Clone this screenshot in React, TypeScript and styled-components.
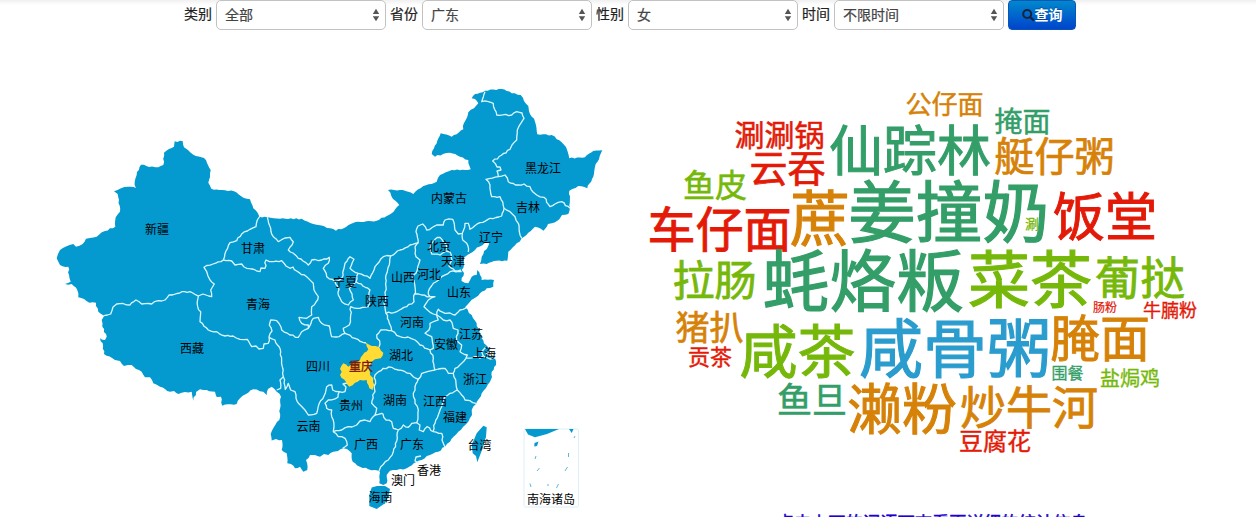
import React from 'react';
import styled, { createGlobalStyle } from 'styled-components';

const GlobalStyle = createGlobalStyle`
  * { box-sizing: border-box; }
  body {
    margin: 0;
    background: #fff;
    font-family: "Liberation Sans", "Noto Sans CJK SC", sans-serif;
    font-size: 14px;
    line-height: 20px;
    color: #222;
  }
`;

const Page = styled.div`
  width: 1256px;
  height: 517px;
  overflow: hidden;
  display: flex;
  flex-direction: column;
  background: linear-gradient(#f0f0f0, #fff 5px);
`;

const FilterBar = styled.form`
  display: flex;
  align-items: center;
  gap: 4px;
  height: 30px;
  flex: none;
  padding-left: 184px;
`;

const FilterLabel = styled.label`
  width: 28px;
  white-space: nowrap;
  height: 22px;
  -webkit-text-stroke: 0.2px currentColor;
`;

const SelectBox = styled.div`
  display: flex;
  align-items: center;
  justify-content: space-between;
  width: 170px;
  height: 30px;
  padding: 0 5px 0 8px;
  border: 1px solid #c2c2c2;
  border-radius: 5px;
  background: #fff;
  color: #444;
  -webkit-text-stroke: 0.2px currentColor;
`;

const SearchButton = styled.button`
  display: flex;
  align-items: center;
  justify-content: center;
  width: 68px;
  height: 30px;
  padding: 0;
  border: 1px solid #0a55b8;
  border-radius: 4px;
  background: linear-gradient(#0088cc, #0044cc);
  color: #fff;
  font: bold 14px/20px "Liberation Sans", "Noto Sans CJK SC", sans-serif;
  text-shadow: 0 -1px 0 rgba(0, 0, 0, 0.25);
`;

const Content = styled.main`
  display: flex;
  height: 487px;
  flex: none;
`;

const MapPanel = styled.section`
  width: 628px;
  height: 487px;
`;

const CloudPanel = styled.section`
  width: 628px;
  display: flex;
  flex-direction: column;
`;

const Drawing = styled.svg`
  display: block;
  flex: none;
  font-family: "Noto Sans CJK SC", sans-serif;
`;

const Hint = styled.p`
  margin: 0 0 0 -20px;
  flex: none;
  text-align: center;
  white-space: nowrap;
  color: #1c00d8;
  font: 17.3px/26px "Noto Sans CJK SC", sans-serif;
  -webkit-text-stroke: 0.5px currentColor;
`;

const filters = [
  { label: '类别', value: '全部' },
  { label: '省份', value: '广东' },
  { label: '性别', value: '女' },
  { label: '时间', value: '不限时间' },
];

const mainland =
  '56.7,258.3 58,254 60,250 66,246.5 73.3,244 76,246.7 82.7,244 86,238.7 90,238 96.7,236.7 105,231 115.3,226.7 115.7,217.3 118,214 120,211.7 118.5,203 117.7,194 114,191.3 121,188.3 128.3,186.7 136,188 134.7,181.7 137,172 141,164.7 149,167 158.3,167.3 163.3,165 164,152.7 169,149 174,146.7 174.7,141.3 182.7,141.3 184,147.3 188,150 193.3,154.7 204,158 207,163 210.7,170 210,177 208.3,182.7 211.3,188.7 222,190 234,191.3 243.3,197.7 250,199.3 253.3,208.3 259.3,216.5 267.3,217.3 280,218.7 301.7,218.7 313.3,224 320,225.3 327,228 336,230.7 358.3,221.7 376.7,220.7 391.7,213.3 399.3,205 393,199 388,190 400,190 413.3,194 423.3,186 436.7,181.7 440,175 451.7,170 470.7,169.3 468.3,160 460,156.7 450,152.7 443,154 435,156.7 431.7,154 434,148.3 440.7,133.3 451.7,136.7 463.3,129.3 464,123 465.7,120 468.3,112.3 474,108.3 478.3,103.3 475,99 471.7,98.3 475,94 485,90.7 501.7,89 511.7,93.3 520.7,95 524,101 528.3,106 529,111 535,121.7 537.3,134.3 551.7,135 556.7,139.3 563.3,144 566,147 567.7,151.7 569.3,158.3 585,157.3 593.3,151 602.3,150.3 599,159.3 595,166.7 593.3,176.7 587.3,188.3 578.3,186 569.3,190.7 570,208.3 568.3,214 562,215 559.3,219.3 551.7,223.3 548,224 543.3,230.7 535,226.7 528.3,232.7 521.7,238.3 516.7,243.3 508.3,251.7 507.3,260.7 496.7,260.7 486.7,264 480,264 481.7,256.7 489.3,243.3 485,242.7 475,250 467.3,255 463.3,258.3 464,265 461.7,270 464,273 461.5,281 468.3,283.3 471.7,276.7 476.7,275 477.3,270 480,275 481.7,280 494,280 493.3,286.7 486.7,288.3 480,293.3 470,301.7 465,307.3 471.7,315 476.7,323.3 479,331 481.7,338.3 486,345 490,350 485,354 495,358.3 496,365 491.7,371.7 492,377 490,381.7 486,388 481.7,393.3 476,404 471.7,410 472,415 468.3,421.7 463,427 458.3,431.7 450,441.7 445,446.7 438.3,451.7 430,455 421.7,460 414,463 406.7,468.3 396.7,470 390,470.7 386.7,475 386.7,483.3 383.3,485 379.3,483.3 379.3,476.7 380,471.7 375,470 368.3,469.3 360,466.7 352.7,461.7 351.7,453.3 347,449 343.3,448.3 338,451 333.3,451.7 328.3,455 324,454 320,456.7 315,455 310,455 306,460 307.3,470 303.3,471.7 300,466.7 295,468.3 291,464 287.3,463.3 286.7,453.3 281.7,450 282,440 276,439 271.7,440.5 270.7,434 274,427 279.3,420 281,396.7 276.7,391.7 271.7,386.7 268,389 266.7,395 263.3,391.7 253.3,389.3 246,394 240,398.3 236.7,404 222.3,405.7 221,396.7 216.7,397 215,391.7 206.7,390 200,389.3 196,392 193.3,400.7 191.7,391.7 185,392 178.3,394 174,391 170,391.7 165,389 160,386.7 153.3,383.3 150,377.3 145,377.3 141.7,371.7 136,369 131.7,365 124,366 120,361 115,360 104,354 102.7,343.3 100,338.3 105,340 106.7,336.7 102.3,326.7 101.7,320 104.3,315.7 98.3,311.7 96,302.7 89.3,302.7 84,299 78.3,297.3 77.3,290 71.7,284 65,284 70.7,281.7 69,275 68.3,266.7 60,265 58,261 56.7,258.3';

const chongqing =
  '366,342.7 371.7,346 379.3,347.3 383.3,352.7 380.7,358.3 375,359.3 371.7,361.7 368.3,368.3 370,375 373.3,378.3 374.3,385 372.7,390 369.3,388.3 366.7,380 360,380 355,382.7 349.3,386.7 346,381.7 340,375 341.7,371.7 340,369 343.3,363.3 348.3,366.7 353.3,363.3 360,360 362.7,355 368.3,349.3 366,342.7';

const borders = [
  // Xinjiang, Tibet, Qinghai
  '104,315.7 110.7,314 113,307 116.7,304 123,303.5 130,305 136,300 141.7,304 151.7,304 158.3,300.7 165,300 169,295 181.7,291.7 190,291.7 198.3,296 203,294 211.7,296.7 210.7,290 214.3,284 210,280 208,276 206.7,271.7 204,267.3 213,264 223.3,260 226,251 230,242.7 236.7,240.7 241.7,234 250,229.3 256,226.7 257.3,220 260,216',
  '223.3,260 231.7,261 235,265 241.7,264 246.7,268.3 252,269 260,271.7 261,268 265,268.3 266,260 273.3,261.7 281.7,260.7 286,266 290,268.3 293,267 296.7,271 306.7,276.7 313.3,283.3 314,290 318.3,296.7 316,302 311.7,306.7 311.7,315 306.7,318.3 299,317.3 301.7,323.3 308.3,325 308.3,328.3 301.7,331.7 298.3,337.3 290,335 281.7,330 276.7,320.7 270.7,320 269.3,325 272,331 269,337',
  '198.3,296 197.7,306.7 200.7,311.7 200,321.7 208.3,330 216.7,331.7 225,336 233,336 240,339.3 247.3,339.3 251.7,346.7 256,346 259,349 263.3,348.3 264,344 268.3,343.3 269,337.3 275,340 280.7,351.7 282.3,366.7 283.3,376.7 280,380 280.7,388.3 276.7,390',
  // Sichuan, Yunnan, Guizhou
  '283.3,376.7 285.3,389.3 288.3,383.3 290.7,390 295,391.7 296,398.3 303.3,408.3 308.3,415 316.7,413.3 319.3,403.3 324,396 326.7,386.7 331.7,385 332.7,390 339.3,391.7 338,397.3 328.3,400 325,403.3 326.7,408.3 331.7,410 331.7,416.7 334,426.7 333.3,431.7 338.3,436.7 345,438.3 347.3,445 342.7,448.3',
  '339.3,391.7 345,391.7 346,387 343,384 347,383',
  '333.3,431.7 341.7,430 348.3,426.7 352,427 356.7,425 360,421 365,420 370,421.7 375,415 376.7,408.3 371.7,403.3 372.7,395 375,391.7 375,375 376.7,373.3 383.3,368.3 391.7,367.3 398.3,370 405,371.7 410,373.3 413.3,376.7 418.3,379.3 421.7,373.3 431.7,370.7 435,370 445,368.3 448.3,373.3 453.3,373.3 455,368.3 461.7,363.3 466,358.3',
  '375,415 381.7,413.3 383,414 386,420 391.7,421.7 393.3,428.3 398.3,430 397.3,438.3 393.3,451.7 388.3,460 380.7,466.7 379,471',
  '398.3,430 403.3,425 408.3,427.3 411.7,423.3 416.7,422.7 420,425 419.3,430 423.3,431.7 427,426.7 433.3,431.7 441.7,433.3 443.3,443.3 445,447.3',
  '416.7,422.7 418.3,410 415,403.3 413.3,393.3 415,386.7 418.3,379.3',
  '453.3,373.3 456,383.3 457.3,390 450,393.3 445,396.7 441.7,406.7 438.3,415 435,423.3 433.3,431',
  '457.3,390 461.7,395 465,400 470,400.7 476,403.3',
  // Anhui, Jiangsu, Shanghai
  '436.7,315 440,317 443.3,320 450,320 453.3,328.3 458,330 456.7,340 461.7,345 460,351.7 467.3,355 466,358 475,356.7 480,358.3 483.3,356 490,359 495,358',
  '483.3,356 481.7,351.7 486,347',
  '436.7,315 438.3,309.3 445,313.3 450,313 455,315 460,310 466,308',
  '436.7,315 433.3,314 424,306.7 428.3,300 435,296.7 430,296.7 428.3,291.7 433.3,283.3 441.7,276.7 450,271.7 461.7,271.7',
  '430,296.7 421.7,295 414,294',
  '435,370 433.3,358.3 430,350 433.3,348.3 431.7,336.7 425,333.3 429,330 430,323.3 438.3,320 436.7,315',
  '418.3,242.7 415,247 416,256.7 420,260 417.3,270 412.7,278.3 415,286.7 414,301.7 406.7,306.7 396.7,311.7 386,313.3 389.3,323.3 391.7,330.7 400,336.7 408,337 415,340 420,345 430,350',
  // Inner Mongolia and the north-east
  '418.3,242.7 416,231.7 418,226 422.7,224 426.7,230 436.7,225 443.3,225 445,220 452.7,219.3 455,230 458.3,234 462.3,233.3 465,223.3 468.3,223.3 470,229.3 480,222.7 490,218.3 501.7,216 504,208.3 500,196.7 491.7,196.7 490,185 486,179.3 498.3,176.7 497,171 501,170 500,167 497,167 492.7,161 510,149.3 512,145 516.7,140 517.3,130 524,118.3 522,113 516.7,111.7 511.7,115 496.7,115 493.3,103.3 488.3,101.7 481.7,101.7 485,91.7',
  '462.3,233.3 462.7,240 466.7,243.3 468.3,252',
  '504,208.3 510,211.7 515,216.7 518.3,223.3 519.3,231.7 521.7,238.3',
  '498.3,176.7 505,175 508.3,181.7 518.3,185 524,184 530,186.7 533,192 536.7,195 544,197.3 550,206.7 555,204 561.7,201.7 570,208.3',
  '267.3,217.3 270.7,228.3 273.3,236.7 278.3,241.7 285,238 290,237.3 293.3,241.7 288.3,250 293,253 298.3,258.3 303,261 308.3,265 311.7,260 321.7,260 329.3,257.3 328.3,263.3 323.3,268.3 326.7,276.7 335,281.7 341.7,278.3 345,263.3 350,256.7 354,259.3 350,268.3 358.3,273.3 370,278.3 375,266.7 383.3,256.7 390.7,256 400,250 410,245 418.3,242.7',
  '335,281.7 338.3,286.7 338.3,295 341.7,301.7 348.3,305 353.3,300 349.3,288.3 356,281.7 358.3,273.3',
  '356,281.7 370,290 368.3,306.7 356.7,308.3 350.7,306.7 350.7,315 349.3,325 343.3,328.3 345,333.3 355,338.3 366,343',
  '390.7,256 389.3,265 386,275 386,286.7 384,303.3 386,313.3',
  '308.3,328.3 313.3,318.3 318.3,317.3 321.7,323.3 329.3,326 331.7,336.7 336,337 345,333.3',
  '379,347 380,344 376.7,335 380.7,330 391.7,330.7',
  // Beijing, Tianjin, Hong Kong
  '430,248 431.7,243.3 435,239.3 440,237.3 443.3,241.7 446.7,246.7 445,251.7 440,255 431.7,254 430,248',
  '446,251 450,252 452,260 449,266 455,271 461,270',
  '421,456 416,457 415,461 419,463',
];

// Breaks long straight runs into short ones with a small sideways shift,
// so that coasts and borders look irregular.
const roughen = (points: string, amount: number) => {
  const list = points.split(' ').map((p) => p.split(',').map(Number));
  const out: string[] = [];
  list.forEach(([x, y], i) => {
    out.push(`${x},${y}`);
    const next = list[i + 1];
    if (!next) return;
    const dx = next[0] - x;
    const dy = next[1] - y;
    const length = Math.hypot(dx, dy);
    const steps = Math.floor(length / 2.6);
    for (let k = 1; k < steps; k += 1) {
      const t = k / steps;
      const wave = Math.sin(x * 12.9898 + y * 78.233 + k * 37.719) * 43758.5453;
      const shift = (wave - Math.floor(wave) - 0.5) * 2 * amount;
      out.push(
        `${(x + dx * t - (dy / length) * shift).toFixed(1)},${(y + dy * t + (dx / length) * shift).toFixed(1)}`,
      );
    }
  });
  return out.join(' ');
};

const provinces: [string, number, number][] = [
  ['新疆', 157, 229], ['甘肃', 253, 248], ['青海', 258, 304], ['西藏', 192, 348],
  ['宁夏', 345, 282], ['陕西', 377, 301], ['山西', 403, 277], ['河北', 429, 274],
  ['北京', 439, 246], ['天津', 453, 261], ['山东', 459, 292], ['河南', 412, 322],
  ['江苏', 471, 334], ['安徽', 446, 344], ['上海', 484, 353], ['湖北', 401, 355],
  ['四川', 318, 366], ['浙江', 475, 379], ['湖南', 395, 400], ['江西', 435, 401],
  ['贵州', 351, 405], ['福建', 455, 417], ['云南', 308.5, 426], ['广西', 366, 444],
  ['广东', 412, 444], ['台湾', 479.5, 445], ['香港', 429, 470], ['澳门', 403, 480],
  ['海南', 380.5, 497], ['黑龙江', 543, 168], ['吉林', 528, 207], ['内蒙古', 449, 198],
  ['辽宁', 491, 237], ['南海诸岛', 551, 499],
];

const green = '#339e68';
const red = '#e31a08';
const lime = '#76b80a';
const orange = '#d68208';
const blue = '#2a9cce';

// text, centre x, centre y, size, colour
const words: [string, number, number, number, string][] = [
  ['公仔面', 944.5, 104, 26, orange],
  ['掩面', 1022.5, 121, 28, green],
  ['涮涮锅', 779.5, 134.5, 30, red],
  ['仙踪林', 910, 150, 54, green],
  ['艇仔粥', 1054.5, 156, 40, orange],
  ['云吞', 787.5, 168, 38, red],
  ['鱼皮', 715, 184.5, 32, lime],
  ['姜撞奶', 949, 212, 67, green],
  ['涮', 1032, 224, 14, lime],
  ['蔗', 820, 218, 60, orange],
  ['车仔面', 719.5, 229, 48, red],
  ['饭堂', 1105, 216, 52, red],
  ['拉肠', 714.5, 280, 42, lime],
  ['蚝烙粄', 863, 281, 67, green],
  ['菜茶', 1030, 279, 62, lime],
  ['葡挞', 1140, 278, 45, lime],
  ['肠粉', 1105, 307, 12, red],
  ['牛腩粉', 1170, 310, 18, red],
  ['猪扒', 709.5, 327, 34, orange],
  ['贡茶', 710, 357, 22, red],
  ['咸茶', 797.5, 351, 58, lime],
  ['咸骨粥', 955, 348, 64, blue],
  ['腌面', 1100, 338, 50, orange],
  ['围餐', 1067.5, 372.5, 16, green],
  ['盐焗鸡', 1130, 378, 20, lime],
  ['鱼旦', 812, 399.5, 35, green],
  ['濑粉', 902, 408, 55, orange],
  ['炒牛河', 1029, 407, 46, orange],
  ['豆腐花', 995, 440.5, 24, red],
];

const ChinaMap = () => (
  <Drawing width="628" height="487" viewBox="0 30 628 487">
    <g fill="#0499cf">
      <polygon points={roughen(mainland, 0.8)} />
      <polygon points="371.7,487.5 377,486 385,486 390,489 388.3,496.7 385,503.3 376.7,509 369.3,506 369.3,495" />
      <polygon points="483.3,425.7 486.7,427.3 486,436.7 482.7,448.3 477.3,462.3 476,456 472.7,453.3 471.7,445 476.7,433.3" />
    </g>
    <g fill="none" stroke="#dcf8ff" strokeWidth="1.3" strokeLinejoin="round">
      {borders.map((points) => (
        <polyline key={points} points={roughen(points, 0.9)} />
      ))}
    </g>
    <polygon points={roughen(chongqing, 0.8)} fill="#ffdb33" />
    <rect x="524" y="429" width="54.5" height="78" rx="1.5" fill="none" stroke="#dcf0f8" />
    <g fill="#0499cf">
      <path d="M525 429H559L547 434L535 437.3L528 434.5Z" />
      <path d="M569 429H573.5L571.7 433Z" />
      <path d="M534.5 443L538.5 441.5L537 446L534.3 446.5Z" />
    </g>
    <path
      d="M568.5 453V457M567.5 467L565 471M539.5 468L537 471M530 483.5L531 487M558.5 484L556.5 488M575 436L574 438M536 456L535 459M549 485H547"
      stroke="#5bb9d6"
      strokeWidth="1"
    />
    <g fontSize="12" textAnchor="middle" fill="#000">
      {provinces.map(([name, x, y]) => (
        <text key={name} x={x} y={y + 4.5}>{name}</text>
      ))}
      <text x="361" y="370.5" fill="#7a1408" stroke="#7a1408" strokeWidth="0.3">重庆</text>
    </g>
  </Drawing>
);

const WordCloud = () => (
  <Drawing width="628" height="479" viewBox="628 30 628 479">
    {words.map(([text, x, y, size, color]) => (
      <text
        key={text}
        x={x}
        y={y + size * 0.38}
        fontSize={size}
        fill={color}
        stroke={color}
        strokeWidth={size * 0.018}
        textAnchor="middle"
      >
        {text}
      </text>
    ))}
  </Drawing>
);

export default function App() {
  return (
    <>
      <GlobalStyle />
      <Page>
        <FilterBar>
          {filters.map(({ label, value }) => (
            <React.Fragment key={label}>
              <FilterLabel>{label}</FilterLabel>
              <SelectBox>
                {value}
                <svg width="8" height="14" viewBox="0 0 8 14" fill="#555">
                  <path d="M4 .8L7.2 6H.8ZM4 13.2L.8 8.2H7.2Z" />
                </svg>
              </SelectBox>
            </React.Fragment>
          ))}
          <SearchButton type="button">
            <svg width="13" height="14" viewBox="0 0 13 14" fill="none" stroke="#16233a" strokeLinecap="round">
              <circle cx="5.2" cy="6" r="4" strokeWidth="2" />
              <path d="M8.5 9.3L11.3 12" strokeWidth="2.4" />
            </svg>
            查询
          </SearchButton>
        </FilterBar>
        <Content>
          <MapPanel>
            <ChinaMap />
          </MapPanel>
          <CloudPanel>
            <WordCloud />
            <Hint>点击上面的词语可查看更详细的统计信息</Hint>
          </CloudPanel>
        </Content>
      </Page>
    </>
  );
}
